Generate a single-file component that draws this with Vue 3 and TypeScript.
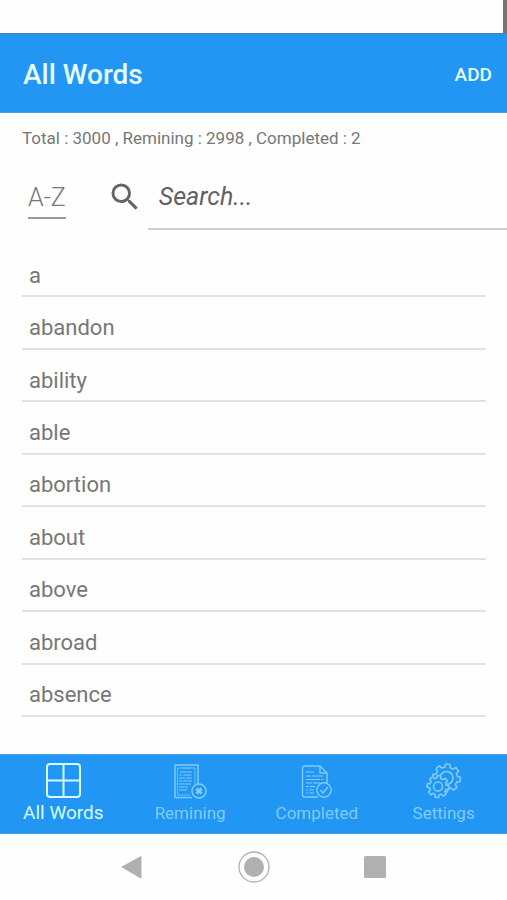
<script setup lang="ts">
import { ref } from 'vue'

interface Tab {
  id: string
  label: string
}

const words: string[] = [
  'a', 'abandon', 'ability', 'able', 'abortion', 'about', 'above', 'abroad', 'absence',
]
const tabs: Tab[] = [
  { id: 'all', label: 'All Words' },
  { id: 'remining', label: 'Remining' },
  { id: 'completed', label: 'Completed' },
  { id: 'settings', label: 'Settings' },
]
const active = ref('all')
const query = ref('')

// Outline of an eight-toothed gear around (cx, cy)
function gear(cx: number, cy: number, outer: number, inner: number, turn: number): string {
  const teeth = 8
  const points: string[] = []
  for (let i = 0; i < teeth; i++) {
    const base = turn + (i * 2 * Math.PI) / teeth
    const corners: [number, number][] = [[-0.25, inner], [-0.16, outer], [0.16, outer], [0.25, inner]]
    for (const [offset, radius] of corners) {
      const x = cx + radius * Math.cos(base + offset)
      const y = cy + radius * Math.sin(base + offset)
      points.push(`${x.toFixed(2)} ${y.toFixed(2)}`)
    }
  }
  return `M${points.join('L')}Z`
}

const frontGear = gear(12, 23.5, 11, 8.5, 0.1)
const backGear = gear(20.5, 15, 14, 11, 0.1)
</script>

<template>
  <div class="screen">
    <div class="status"><span class="status-edge"></span></div>

    <header class="bar">
      <h1>All Words</h1>
      <button type="button" class="add">ADD</button>
    </header>

    <main>
      <p class="summary">Total : 3000 , Remining : 2998 , Completed : 2</p>

      <div class="tools">
        <button type="button" class="sort">A-Z</button>
        <label class="search-icon" for="search" aria-label="Search">
          <svg width="36" height="36" viewBox="0 0 24 24">
            <path d="M15.5 14h-.79l-.28-.27A6.47 6.47 0 0 0 16 9.5 6.5 6.5 0 1 0 9.5 16c1.61 0 3.09-.59 4.23-1.57l.27.28v.79l5 4.99L20.49 19l-4.99-5zm-6 0C7.01 14 5 11.99 5 9.5S7.01 5 9.5 5 14 7.01 14 9.5 11.99 14 9.5 14z" />
          </svg>
        </label>
        <input id="search" v-model="query" type="text" placeholder="Search..." />
      </div>

      <ul class="words">
        <li v-for="word in words" :key="word">{{ word }}</li>
      </ul>
    </main>

    <nav class="tabs">
      <button
        v-for="tab in tabs"
        :key="tab.id"
        type="button"
        class="tab"
        :class="{ active: tab.id === active }"
        @click="active = tab.id"
      >
        <svg v-if="tab.id === 'all'" width="36" height="36" viewBox="0 0 36 36" stroke-width="2">
          <rect x="2" y="1" width="33" height="33" rx="3" />
          <path d="M18.5 1v33M2 17.500h33" />
        </svg>
        <svg v-else-if="tab.id === 'remining'" width="36" height="36" viewBox="0 0 36 36" stroke-width="1.5">
          <path d="M20 34.500H3V2H26v19" />
          <path d="M18 32H5.500V5H23v16M10 5h9" stroke-width=".8" />
          <path d="M8 9h12M7 12h3m1.500 0h8M7 15h6m1 0h6M7 18h3m1 0h9M7 21h12M7 24h9M7 27h8" stroke-width="1.1" />
          <circle cx="27" cy="28" r="7" />
          <path d="M24.500 25.500l5 5M29.500 25.500l-5 5" stroke-width="3" />
        </svg>
        <svg v-else-if="tab.id === 'completed'" width="36" height="36" viewBox="0 0 36 36" stroke-width="1.4">
          <path d="M19 34H5.500a2 2 0 0 1-2-2V5a2 2 0 0 1 2-2H21l7 7v10M21 3v7h7" />
          <path d="M7 9h8M7 13h5m1 0h11M7 16.500h14m1 0h2M7 20h6m1 0h7M7 23.500h3m1 0h5M7 27h2m1 0h5M7 30h2m1 0h5" stroke-width="1.100" />
          <circle cx="25" cy="27" r="7.200" />
          <path d="M21.500 27l2.500 3 5-6" />
        </svg>
        <svg v-else width="36" height="36" viewBox="0 0 36 36" stroke-width="1.600" stroke-linejoin="round">
          <defs>
            <mask id="behind-front-gear">
              <rect width="36" height="36" fill="#fff" stroke="none" />
              <path :d="frontGear" fill="#000" stroke="#000" />
            </mask>
          </defs>
          <g mask="url(#behind-front-gear)">
            <path :d="backGear" />
            <circle cx="20.500" cy="15" r="6.500" />
          </g>
          <path :d="frontGear" />
          <circle cx="12" cy="23.500" r="4.500" />
        </svg>
        <span>{{ tab.label }}</span>
      </button>
    </nav>

    <div class="system">
      <button type="button" aria-label="Back">
        <svg width="32" height="32" viewBox="0 0 32 32"><path d="M5 16L24 5.500v21.500z" fill="#b0b0b0" stroke="#b0b0b0" stroke-linejoin="round" /></svg>
      </button>
      <button type="button" aria-label="Home">
        <svg width="32" height="32" viewBox="0 0 32 32"><circle cx="16" cy="16" r="15" fill="none" stroke="#b0b0b0" stroke-width="1.300" /><circle cx="16" cy="16" r="10" fill="#b0b0b0" /></svg>
      </button>
      <button type="button" aria-label="Recent apps">
        <svg width="32" height="32" viewBox="0 0 32 32"><rect x="5" y="5" width="22" height="22" rx="1.500" fill="#b0b0b0" /></svg>
      </button>
    </div>
  </div>
</template>

<style>
body {
  margin: 0;
  background: #fefefe;
}
</style>

<style scoped>
.screen {
  display: flex;
  flex-direction: column;
  min-height: 100vh;
  font-family: Roboto, "Liberation Sans", sans-serif;
  color: #777;
  background: #fefefe;
}
button {
  padding: 0;
  border: 0;
  background: none;
  font: inherit;
  color: inherit;
  cursor: pointer;
}
svg {
  display: block;
}
.status {
  display: flex;
  justify-content: flex-end;
  height: 33px;
}
.status-edge {
  width: 4px;
  background: #757575;
}
.bar {
  display: flex;
  align-items: center;
  justify-content: space-between;
  box-sizing: border-box;
  height: 80px;
  padding: 3px 15px 0 23px;
  border-top: 1px solid #4a80ad;
  border-bottom: 1px solid #4c9fdf;
  background: #2196f3;
  color: #e8fbff;
}
h1 {
  margin: 0;
  font-size: 28px;
  font-weight: 500;
}
.add {
  font-size: 19px;
  font-weight: 500;
}
main {
  display: flex;
  flex: 1;
  flex-direction: column;
}
.summary {
  margin: 0;
  padding: 13px 22px 0;
  font-size: 17px;
  line-height: 24px;
}
.tools {
  display: flex;
  align-items: flex-start;
  padding: 15px 0 15px 28px;
}
.sort {
  margin-top: 17px;
  padding-bottom: 3px;
  border-bottom: 2px solid #999;
  font-size: 25px;
  font-weight: 300;
  line-height: 32px;
}
.search-icon {
  margin: 14px 5px 0 41px;
}
.search-icon svg {
  fill: #666;
}
input {
  flex: 1;
  box-sizing: border-box;
  min-width: 0;
  height: 65px;
  padding: 0 11px;
  border: 0;
  border-bottom: 2px solid #d0d0d0;
  background: none;
  font: italic 25px Roboto, "Liberation Sans", sans-serif;
  color: #616161;
  outline: 0;
}
input::placeholder {
  color: #616161;
  opacity: 1;
}
.words {
  display: grid;
  flex: 1;
  grid-auto-rows: minmax(48px, 1fr);
  margin: 0 21px 37px 22px;
  padding: 0;
  list-style: none;
}
.words li {
  display: flex;
  align-items: center;
  padding: 10px 7px 0;
  border-bottom: 2px solid #e2e2e2;
  font-size: 22px;
}
.tabs {
  display: grid;
  grid-template-columns: repeat(4, 1fr);
  box-sizing: border-box;
  height: 80px;
  border-top: 1px solid #4c9fdf;
  border-bottom: 1px solid #4c9fdf;
  background: #2196f3;
}
.tab {
  display: flex;
  flex-direction: column;
  align-items: center;
  padding-top: 8px;
  font-size: 17px;
  line-height: 24px;
  color: #80ccf9;
}
.tab svg {
  fill: none;
  stroke: currentColor;
}
.tab span {
  margin-top: 2px;
}
.tab.active {
  font-size: 19px;
  color: #d5fbff;
}
.system {
  display: flex;
  align-items: center;
  justify-content: center;
  gap: 89px;
  height: 66px;
}
</style>
